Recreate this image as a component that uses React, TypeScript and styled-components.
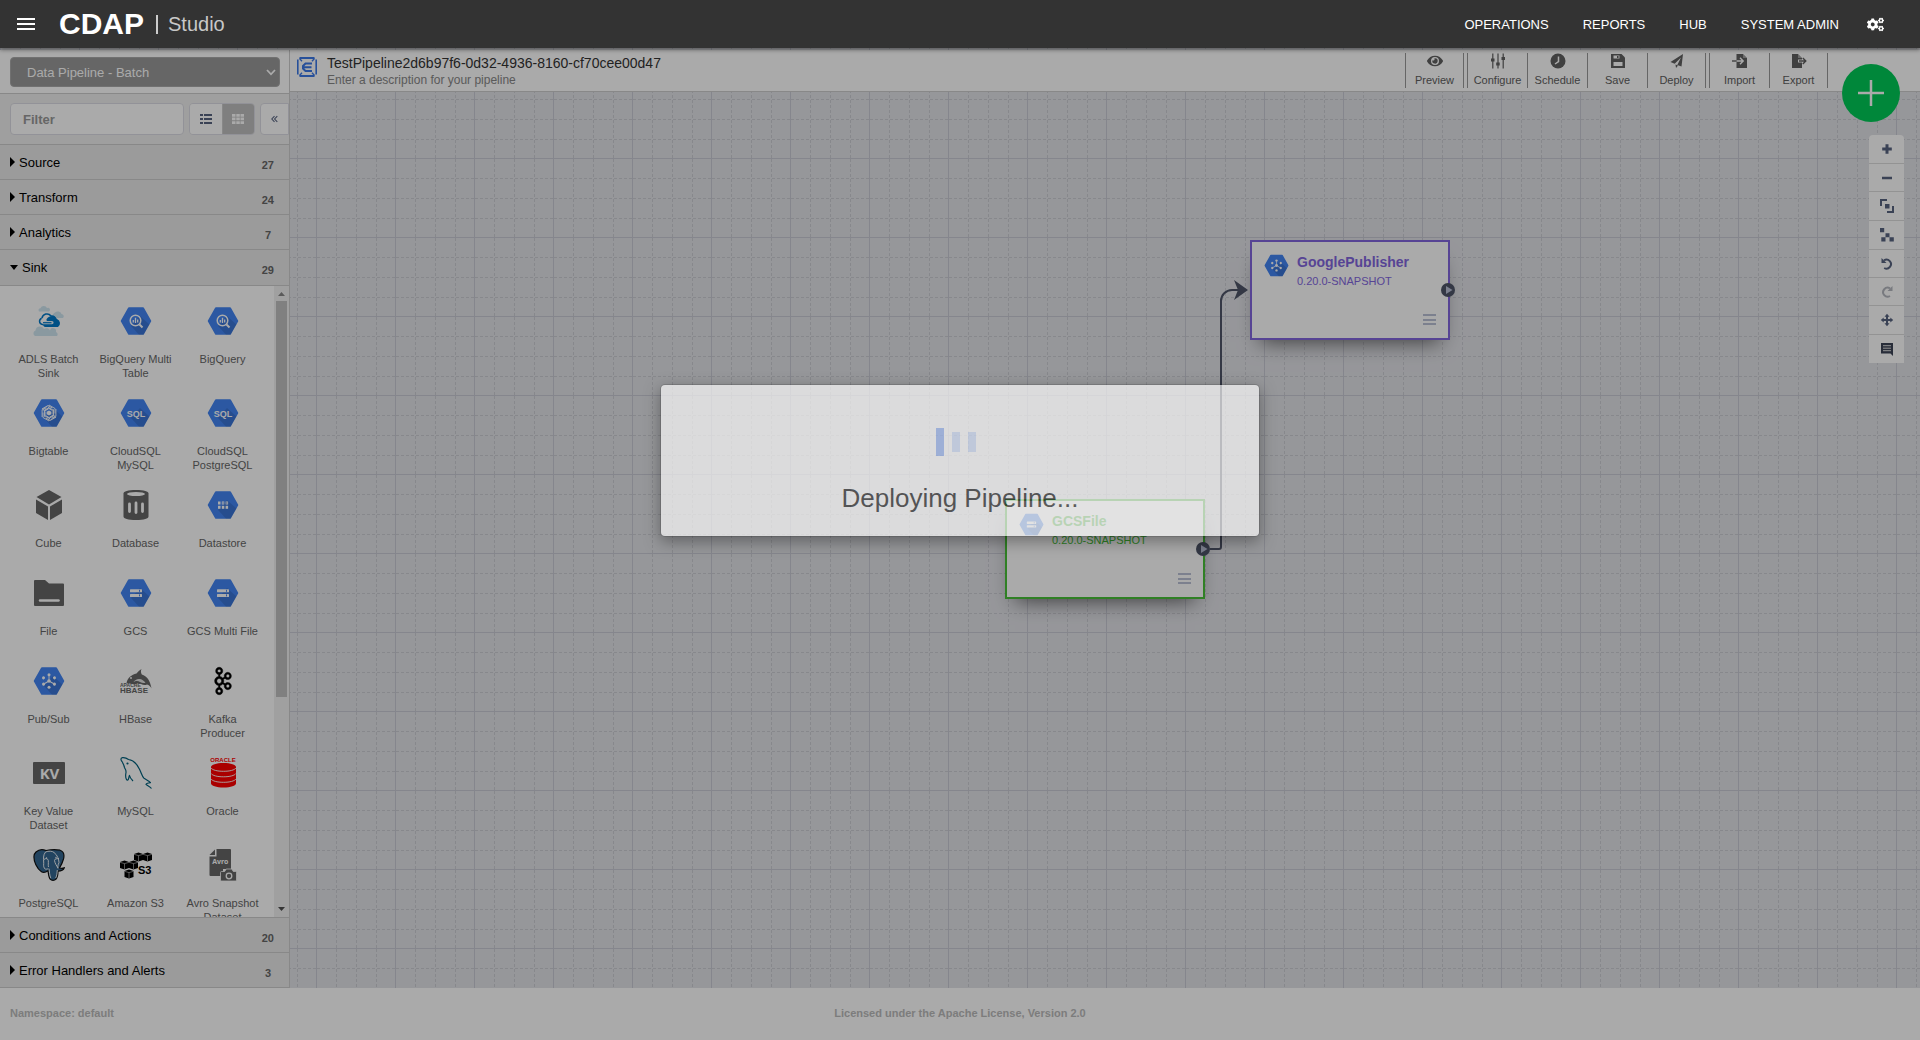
import React from 'react';
import styled, { createGlobalStyle } from 'styled-components';
import { FaCogs, FaEye } from 'react-icons/fa';
import { SiApachekafka } from 'react-icons/si';

const GlobalStyle = createGlobalStyle`
  *, *::before, *::after { box-sizing: border-box; }
  body {
    margin: 0;
    font-family: "Liberation Sans", Arial, sans-serif;
    font-size: 13px;
    color: #333;
    background: #fff;
  }
  button, input, select { font-family: inherit; margin: 0; }
  button { cursor: pointer; }
  svg { display: block; flex: none; }
`;

/* ---------- page frame ---------- */

const Page = styled.div`
  position: relative;
  display: flex;
  flex-direction: column;
  height: 100vh;
  background: #e2e3e8;
  overflow: hidden;
`;

const GridSvg = styled.svg`
  position: absolute;
  inset: 0;
  width: 100%;
  height: 100%;
`;

const Header = styled.header`
  position: relative;
  z-index: 30;
  flex: none;
  display: flex;
  align-items: center;
  height: 48px;
  padding: 0 36px 0 17px;
  background: #333;
  color: #fff;
  box-shadow: 0 2px 4px rgba(0, 0, 0, 0.4);
`;

const BareButton = styled.button`
  display: flex;
  align-items: center;
  justify-content: center;
  padding: 0;
  border: 0;
  background: none;
  color: inherit;
`;

const Brand = styled.a`
  margin-left: 24px;
  color: #fff;
  font-size: 30px;
  font-weight: 700;
  line-height: 48px;
  text-decoration: none;
`;

const Divider = styled.span`
  width: 2px;
  height: 19px;
  margin: 0 10px 0 12px;
  background: #ccc;
`;

const AppName = styled.h1`
  margin: 0;
  color: #c8c8c8;
  font-size: 20px;
  font-weight: 400;
`;

const Nav = styled.nav`
  display: flex;
  align-items: center;
  gap: 34px;
  margin-left: auto;
`;

const NavLink = styled.a`
  color: #fff;
  font-size: 13px;
  text-decoration: none;
`;

const SettingsButton = styled(BareButton)`
  margin-left: -6px;
`;

const Workspace = styled.div`
  position: relative;
  flex: 1;
  min-height: 0;
  display: flex;
  padding-top: 2px;
`;

const Footer = styled.footer`
  position: relative;
  flex: none;
  display: grid;
  grid-template-columns: 1fr auto 1fr;
  align-items: center;
  height: 52px;
  padding: 0 10px 2px;
  background: #fff;
  color: #bbb;
  font-size: 11px;
  font-weight: 700;
`;

/* ---------- side panel ---------- */

const Sidebar = styled.aside`
  flex: none;
  display: flex;
  flex-direction: column;
  width: 290px;
  border-right: 1px solid #ccc;
  background: #fff;
`;

const ArtifactRow = styled.div`
  position: relative;
  padding: 7px 9px 6px 10px;
  border-bottom: 1px solid #ccc;
`;

const ArtifactSelect = styled.select`
  appearance: none;
  width: 100%;
  height: 30px;
  padding: 0 24px 0 16px;
  border: 1px solid #aaa;
  border-radius: 4px;
  background: #999;
  color: #fff;
  font-size: 13px;
`;

const SelectArrow = styled.svg`
  position: absolute;
  top: 19px;
  right: 13px;
  pointer-events: none;
`;

const FilterRow = styled.div`
  display: flex;
  gap: 5px;
  padding: 9px 0 9px 10px;
  border-bottom: 1px solid #ccc;
  background: #efefef;
`;

const FilterInput = styled.input`
  flex: 1;
  min-width: 0;
  height: 32px;
  padding: 0 12px;
  border: 1px solid #dcdce4;
  border-radius: 4px;
  background: #fff;
  font-size: 13px;
  &::placeholder {
    color: #999;
    font-weight: 700;
    opacity: 1;
  }
`;

const ViewSwitch = styled.div`
  display: flex;
  width: 66px;
  border: 1px solid #dcdce4;
  border-radius: 4px;
  overflow: hidden;
`;

const ViewButton = styled(BareButton)<{ $active?: boolean }>`
  flex: 1;
  background: ${(p) => (p.$active ? '#bfbfbf' : '#fff')};
  color: ${(p) => (p.$active ? '#fff' : '#576380')};
  & + & {
    border-left: 1px solid #ccc;
  }
`;

const CollapseButton = styled(BareButton)`
  width: 29px;
  border: 1px solid #dcdce4;
  border-radius: 4px 0 0 4px;
  background: #fff;
  color: #576380;
`;

const GroupHeader = styled.button<{ $open?: boolean }>`
  flex: none;
  display: flex;
  align-items: center;
  gap: 4px;
  width: 100%;
  height: ${(p) => (p.$open ? 36 : 35)}px;
  padding: 0 15px 0 10px;
  border: 0;
  border-bottom: 1px solid #ccc;
  background: #e9e9e9;
  color: #000;
  font-size: 13px;
  text-align: left;
`;

const GroupCount = styled.span`
  min-width: 12px;
  margin-left: auto;
  padding-top: 5px;
  color: #666;
  font-size: 11px;
  font-weight: 700;
  text-align: center;
`;

const PluginPane = styled.div`
  flex: 1;
  min-height: 0;
  display: flex;
  border-bottom: 1px solid #ccc;
  overflow: hidden;
`;

const PluginGrid = styled.ul`
  flex: 1;
  display: grid;
  grid-template-columns: repeat(3, 87px);
  grid-auto-rows: max-content;
  align-content: start;
  margin: 0;
  padding: 10px 0 0 5px;
  list-style: none;
`;

const PluginItem = styled.li`
  display: flex;
  flex-direction: column;
  align-items: center;
  gap: 15px;
  min-height: 88px;
  padding: 9px 7px 8px;
  color: #666;
  font-size: 11px;
  line-height: 14px;
  text-align: center;
`;

const ScrollTrack = styled.div`
  flex: none;
  display: flex;
  flex-direction: column;
  align-items: center;
  gap: 5px;
  width: 15px;
  padding: 6px 0;
  background: #f1f1f1;
`;

const ScrollThumb = styled.div`
  width: 11px;
  height: 64%;
  background: #c1c1c1;
`;

const ScrollDown = styled.div`
  margin-top: auto;
`;

/* ---------- main column ---------- */

const Main = styled.main`
  flex: 1;
  min-width: 0;
  display: flex;
  flex-direction: column;
`;

const TopBar = styled.div`
  flex: none;
  display: flex;
  height: 42px;
  padding: 0 92px 0 7px;
  border-bottom: 1px solid #ccc;
  background: #fff;
`;

const PipelineMark = styled.div`
  padding: 7px 10px 0 0;
`;

const PipelineInfo = styled.div`
  padding-top: 4px;
`;

const PipelineName = styled.h2`
  margin: 0;
  color: #333;
  font-size: 14px;
  font-weight: 400;
  line-height: 18px;
`;

const PipelineDescription = styled.p`
  margin: 0;
  color: #888;
  font-size: 12px;
  line-height: 16px;
`;

const Actions = styled.div`
  display: flex;
  gap: 3px;
  height: 35px;
  margin: 3px 0 0 auto;
`;

const ActionGroup = styled.div`
  display: flex;
`;

const ActionButton = styled.button`
  display: flex;
  flex-direction: column;
  align-items: center;
  gap: 4px;
  width: 60px;
  padding: 0;
  border: 0;
  border-left: 1px solid #999;
  background: none;
  color: #606060;
  font-size: 11px;
  line-height: 14px;
  &:last-child {
    width: 59px;
    border-right: 1px solid #999;
  }
`;

const Canvas = styled.div`
  position: relative;
  flex: 1;
  min-height: 0;
`;

const Connections = styled.svg`
  position: absolute;
  inset: 0;
  width: 100%;
  height: 100%;
`;

const Node = styled.section<{ $x: number; $y: number; $color: string }>`
  position: absolute;
  left: ${(p) => p.$x}px;
  top: ${(p) => p.$y}px;
  display: flex;
  flex-direction: column;
  justify-content: space-between;
  width: 200px;
  height: 100px;
  padding: 10px 12px 12px;
  border: 2px solid ${(p) => p.$color};
  background: #fff;
  color: ${(p) => p.$color};
  box-shadow: 0 12px 20px -10px rgba(0, 0, 0, 0.6);
`;

const NodeHead = styled.div`
  display: flex;
  gap: 8px;
`;

const NodeIcon = styled.div`
  padding-top: 1px;
`;

const NodeName = styled.h3`
  margin: 0;
  font-size: 14px;
  font-weight: 700;
  line-height: 20px;
`;

const NodeVersion = styled.div`
  font-size: 11px;
  line-height: 18px;
`;

const NodeMenu = styled(BareButton)`
  align-self: flex-end;
  color: #bac0d6;
`;

const Endpoint = styled.span`
  position: absolute;
  top: 41px;
  right: -7px;
`;

const AddButton = styled(BareButton)`
  position: absolute;
  top: 16px;
  right: 20px;
  width: 58px;
  height: 58px;
  border-radius: 50%;
  background: #00cb57;
  color: #fff;
`;

const CanvasTools = styled.div`
  position: absolute;
  top: 43px;
  right: 16px;
  display: flex;
  flex-direction: column;
  width: 35px;
  border-radius: 4px 4px 0 0;
  background: #fff;
  overflow: hidden;
`;

const ToolButton = styled(BareButton)<{ $tall?: boolean; $faded?: boolean }>`
  height: ${(p) => (p.$tall ? 29 : 28)}px;
  color: ${(p) => (p.$faded ? '#b4b7bf' : '#576380')};
  & + & {
    border-top: 1px solid #ddd;
  }
`;

/* ---------- deploy dialog ---------- */

const Backdrop = styled.div`
  position: absolute;
  inset: 0;
  z-index: 20;
  display: flex;
  align-items: flex-start;
  justify-content: center;
  padding-top: 384px;
  background: rgba(0, 0, 0, 0.333);
`;

const Dialog = styled.div`
  display: flex;
  flex-direction: column;
  align-items: center;
  gap: 28px;
  width: 600px;
  padding: 43px 0 24px;
  border: 1px solid rgba(0, 0, 0, 0.2);
  border-radius: 5px;
  background: #fff;
  background-clip: padding-box;
  box-shadow: 0 5px 15px rgba(0, 0, 0, 0.5);
  opacity: 0.66;
`;

const Spinner = styled.div`
  display: flex;
  align-items: center;
  gap: 8px;
  height: 28px;
  margin-right: 8px;
`;

const SpinnerBar = styled.span<{ $strong?: boolean }>`
  width: 8px;
  height: ${(p) => (p.$strong ? 28 : 20)}px;
  background: ${(p) => (p.$strong ? '#a2bcf5' : '#d5e2fb')};
`;

const DialogText = styled.p`
  margin: 0;
  color: #333;
  font-size: 26px;
  line-height: 28px;
`;

/* ---------- plugin drawings ---------- */

type HexProps = { children?: React.ReactNode; size?: number };

const Hex = ({ children, size = 32 }: HexProps) => (
  <svg width={size} height={size} viewBox="0 0 32 32" aria-hidden="true">
    <path
      d="M9 2.2h14a1 1 0 0 1 .9.5l7.2 12.7a1.200 1.200 0 0 1 0 1.200l-7.200 12.700a1 1 0 0 1-.9.5H9a1 1 0 0 1-.9-.5L.9 16.600a1.200 1.200 0 0 1 0-1.200L8.100 2.700A1 1 0 0 1 9 2.200z"
      fill="#4285f4"
    />
    <path d="M20 11l9.500 8.500-5.600 9.800a1 1 0 0 1-.9.500h-4L11 21z" fill="#000" opacity="0.12" />
    {children}
  </svg>
);

const BigQueryIcon = () => (
  <Hex>
    <circle cx="15.500" cy="15.500" r="5.300" fill="none" stroke="#fff" strokeWidth="1.500" />
    <path d="M19.500 19.500l3 3" stroke="#fff" strokeWidth="2" />
    <path d="M13.300 15v2.500M15.500 12.800v5.200M17.700 14.500v3" stroke="#fff" strokeWidth="1.300" />
  </Hex>
);

const BigtableIcon = () => (
  <Hex>
    <g fill="none" stroke="#fff" strokeWidth="0.900">
      {[0, 60, 120, 180, 240, 300].map((a) => (
        <g key={a} transform={`rotate(${a} 16 16)`}>
          <path d="M16 8l6 3.500v5" />
          <path d="M15 10.200l5 2.800v4.500" />
        </g>
      ))}
    </g>
    <path d="M16 13.500l2.400 1.200v2.600L16 18.500l-2.400-1.200v-2.600z" fill="#fff" />
  </Hex>
);

const SqlIcon = () => (
  <Hex>
    <text x="16" y="19.500" textAnchor="middle" fill="#fff" fontSize="9" fontWeight="700" fontFamily="Liberation Sans">
      SQL
    </text>
  </Hex>
);

const DatastoreIcon = () => (
  <Hex>
    <g fill="#fff">
      <rect x="11" y="12.500" width="2.500" height="3" />
      <rect x="11" y="16.800" width="2.500" height="3" />
      <rect x="14.800" y="16.800" width="2.500" height="3" />
      <rect x="18.600" y="16.800" width="2.500" height="3" />
    </g>
    <g fill="none" stroke="#fff" strokeWidth="0.800">
      <rect x="15.200" y="12.900" width="1.700" height="2.200" />
      <rect x="19" y="12.900" width="1.700" height="2.200" />
    </g>
  </Hex>
);

const GcsIcon = ({ size }: { size?: number }) => (
  <Hex size={size}>
    <rect x="10" y="12.300" width="12" height="3" rx="0.500" fill="#fff" />
    <rect x="10" y="16.900" width="12" height="3" rx="0.500" fill="#fff" />
    <path d="M19.500 12.800v2M19.500 17.400v2" stroke="#4285f4" strokeWidth="1" />
  </Hex>
);

const PubSubIcon = ({ size }: { size?: number }) => (
  <Hex size={size}>
    <g fill="#fff" stroke="#fff">
      <circle cx="16" cy="16" r="1.800" stroke="none" />
      {[0, 60, 120, 180, 240, 300].map((a) => (
        <g key={a} transform={`rotate(${a} 16 16)`}>
          <circle cx="16" cy="9.700" r="1.500" stroke="none" />
          {a % 120 === 0 && <path d="M16 15v-4.500" strokeWidth="0.900" />}
        </g>
      ))}
    </g>
  </Hex>
);

const AdlsIcon = () => (
  <svg width="32" height="32" viewBox="0 0 32 32" aria-hidden="true">
    <g fill="#cfe6f1">
      <path d="M6 6.500a2 2 0 0 1 1.500-3.300A3.500 3.500 0 0 1 14 3a2 2 0 0 1 2 3.500z" />
      <path d="M20 13a4 4 0 0 1 2-5.500 4 4 0 0 1 6.500 1.500 2.300 2.300 0 0 1 1.500 4z" />
      <path d="M2 31a3 3 0 0 1 .5-5.500 4.500 4.500 0 0 1 8.500-1.500 4 4 0 0 1 6 1.500 3 3 0 0 1 6 1.500 2.500 2.500 0 0 1 1 4z" />
    </g>
    <path d="M12.500 22a3.200 3.200 0 0 1 .5-6.300A6 6 0 0 1 24 14a4.500 4.500 0 0 1 1 8z" fill="#0078c8" />
    <path
      d="M18.500 19.500h-9a3.200 3.200 0 0 1-.5-6.300 5 5 0 0 1 9-2.200 4 4 0 0 1 4.500 3"
      fill="none"
      stroke="#0078c8"
      strokeWidth="1.500"
    />
    <path d="M8.500 13.500c3-.5 4.500.5 5.500 2.500h5a1.600 1.600 0 0 1 0 3.200h-9" fill="#fff" opacity="0.900" />
    <path d="M10 17.700h8.500" stroke="#0078c8" strokeWidth="1.200" />
  </svg>
);

const CubeIcon = () => (
  <svg width="32" height="32" viewBox="0 0 32 32" fill="#666" aria-hidden="true">
    <path d="M16 1l12.500 7L16 15.500 3.500 8z" />
    <path d="M3 10.500l12 7V31L3 24z" />
    <path d="M29 10.500l-12 7V31l12-7z" />
  </svg>
);

const DatabaseIcon = () => (
  <svg width="32" height="32" viewBox="0 0 32 32" aria-hidden="true">
    <path d="M3.500 4.500C3.500 2.500 8 1 16 1s12.500 1.500 12.500 3.500v23c0 2-4.500 3.500-12.500 3.500S3.500 29.500 3.500 27.500z" fill="#666" />
    <ellipse cx="16" cy="5" rx="9" ry="2" fill="#fff" />
    <g stroke="#fff" strokeWidth="2.800" strokeLinecap="round">
      <path d="M9.500 15v7.500M16 14v9.500M22.500 15v7.500" />
    </g>
  </svg>
);

const FileIcon = () => (
  <svg width="32" height="32" viewBox="0 0 32 32" aria-hidden="true">
    <path d="M1 4a1 1 0 0 1 1-1h10l4 3.500h14a1 1 0 0 1 1 1V28a1 1 0 0 1-1 1H2a1 1 0 0 1-1-1z" fill="#666" />
    <path d="M7 23.500h18.500" stroke="#fff" strokeWidth="2.500" strokeLinecap="round" />
  </svg>
);

const HBaseIcon = () => (
  <svg width="32" height="32" viewBox="0 0 32 32" aria-hidden="true">
    <path
      d="M6.500 18c1-5 5-8.500 10-9.500 1.500-1.500 3-3.500 5-4.500-1 2-.5 4 .3 5.500 5 1.500 8.500 6 9.700 14-1-2-2.500-3.500-4.500-4-2 1-4 .500-6-.5l-3-1-3 1.500z"
      fill="#666"
    />
    <path d="M13 17.500c2-2 5-2 7-.5 2 1 4 1.500 5.500.5-1.500-1.200-3-3-5.500-3.500-3-.5-5 1-7 3.500z" fill="#fff" opacity="0.800" />
    <circle cx="11" cy="13" r="0.900" fill="#fff" />
    <text x="0" y="22" fill="#666" fontSize="5" fontWeight="700" fontFamily="Liberation Sans">
      APACHE
    </text>
    <text x="0" y="28" fill="#666" fontSize="8" fontWeight="700" fontFamily="Liberation Sans">
      HBASE
    </text>
  </svg>
);

const KeyValueIcon = () => (
  <svg width="32" height="32" viewBox="0 0 32 32" aria-hidden="true">
    <rect y="5" width="32" height="22" rx="1" fill="#666" />
    <text x="16.500" y="21.500" textAnchor="middle" fill="#fff" fontSize="15" fontWeight="700" fontFamily="Open Sans">
      KV
    </text>
  </svg>
);

const MySqlIcon = () => (
  <svg width="32" height="32" viewBox="0 0 32 32" fill="none" stroke="#00607d" strokeWidth="1.200" strokeLinejoin="round" aria-hidden="true">
    <path d="M31.500 31.500c-1-1.500-3-2.500-5.500-4 0-1 2.500-1.500 4.500-1.800-1.500-1.700-4-3-6.500-4.500-2-1.500-2.500-5-4.500-9C16.500 6 13 3 8.500 2.500 6.500 1 4.500.500 2.500.700.300 1 .700 3 2 4.500 3.500 7 4 8.500 4.500 10.500c.800 2 1.800 2.500 1.500 5-.500 2.500-.700 5 .5 7 .500 1 1.500 1 2-.500.500-1.500.500-3 1-3.500.500 2.500 2 4 3.500 5.500" />
    <circle cx="7.500" cy="6.500" r="0.500" fill="#00607d" />
  </svg>
);

const OracleIcon = () => (
  <svg width="32" height="32" viewBox="0 0 32 32" aria-hidden="true">
    <text x="16" y="5" textAnchor="middle" fill="#f00" fontSize="6" fontWeight="700" fontFamily="Liberation Sans">
      ORACLE
    </text>
    <path d="M4 10c0-2.200 5.300-4 12.500-4S29 7.800 29 10v16.500c0 2.200-5.300 4-12.500 4S4 28.700 4 26.500z" fill="#f00" />
    <g fill="none" stroke="#fff" strokeWidth="0.900">
      <path d="M4 11c1.500 2 6 3.300 12.500 3.300S27.500 13 29 11" />
      <path d="M4 16.500c1.500 2 6 3.300 12.500 3.300s11-1.300 12.500-3.300" />
      <path d="M4 22c1.500 2 6 3.300 12.500 3.300S27.500 24 29 22" />
    </g>
  </svg>
);

const PostgresIcon = () => (
  <svg width="32" height="32" viewBox="0 0 32 32" aria-hidden="true">
    <path
      d="M3 3C6 .3 10.500.5 13 1.500c5-1 10-1.200 14-.3 4 1.300 4.500 4.800 3.500 8.800-1 3.500-2.500 6.500-4 9 2 .5 3.500.3 4.800-.2-.8 2.200-3.300 3.400-6.300 3.400 0 3-.5 6-2 8-1.500 1.500-4.500 1.500-5.800 0-1.500-2-1.700-5-2.200-8.500-2 1.500-4.500 2.300-6.500 1C4 20 .5 12 1 7c.2-2 1-3 2-4z"
      fill="#336791"
      stroke="#111"
      strokeWidth="1.200"
    />
    <g fill="none" stroke="#fff" strokeWidth="0.900">
      <path d="M12.500 3c-2.500 3-2 7-1.800 10 .2 2.500-.7 4 .8 6.500 1 1 2.500.7 3.700.2" />
      <path d="M12.500 3c3-1.300 7-1 8.500.5 3.500 2.500 4.800 7 5 10-1 2.500-1.500 4-1 6" />
      <path d="M11 10.500c1.500-1.500 4-1 4.300 1 .2 3-.3 4.500.2 6.500M26 9.500c-2 .3-4.500 0-4.500 2 .5 3 2 5 3.500 7.500" />
      <path d="M16 19.700c.5 3 .5 6.500 1.800 9.500M24.300 21c-.3 3-.3 5.500-1.600 8" />
    </g>
    <circle cx="13.500" cy="9" r="0.700" fill="#fff" />
    <circle cx="23" cy="8.500" r="0.700" fill="#fff" />
  </svg>
);

const s3Cubes = [
  [14, 3],
  [23, 3],
  [0, 11],
  [9, 11],
  [4.5, 20],
];

const S3Icon = () => (
  <svg width="32" height="32" viewBox="0 0 32 32" aria-hidden="true">
    {s3Cubes.map(([x, y]) => (
      <g key={`${x}-${y}`} transform={`translate(${x} ${y})`}>
        <path d="M0 2l4.500-1.500L9 2v6L4.500 9.500 0 8z" fill="#000" />
        <path d="M0 2.300l4.500 1.300L9 2.300M4.500 3.600v5.600" fill="none" stroke="#fff" strokeWidth="0.500" />
      </g>
    ))}
    <text x="18" y="25" fill="#000" fontSize="11" fontWeight="700" fontFamily="Liberation Sans">
      S3
    </text>
  </svg>
);

const AvroIcon = () => (
  <svg width="32" height="32" viewBox="0 0 32 32" aria-hidden="true">
    <path d="M9.500 0H23a1 1 0 0 1 1 1v19h-8v7H3.500a1 1 0 0 1-1-1V7.500h7z" fill="#666" />
    <path d="M8 .5V6H2.500z" fill="#666" />
    <text x="13.300" y="14.800" textAnchor="middle" fill="#fff" fontSize="7" fontWeight="700" fontFamily="Open Sans">
      Avro
    </text>
    <path
      d="M14.500 22.500h3.200l1.500-2.500h5.600l1.500 2.500h2.200a1 1 0 0 1 1 1V31a1 1 0 0 1-1 1h-14a1 1 0 0 1-1-1v-7.500a1 1 0 0 1 1-1z"
      fill="#666"
      stroke="#fff"
      strokeWidth="0.800"
    />
    <circle cx="22" cy="27" r="2.800" fill="none" stroke="#fff" strokeWidth="1.300" />
  </svg>
);

const KafkaIcon = () => (
  <SiApachekafka size={32} color="#000" stroke="#000" strokeWidth="0.4" viewBox="-2 -2 28 28" />
);

const plugins: { name: string; icon: React.ReactNode }[] = [
  { name: 'ADLS Batch Sink', icon: <AdlsIcon /> },
  { name: 'BigQuery Multi Table', icon: <BigQueryIcon /> },
  { name: 'BigQuery', icon: <BigQueryIcon /> },
  { name: 'Bigtable', icon: <BigtableIcon /> },
  { name: 'CloudSQL MySQL', icon: <SqlIcon /> },
  { name: 'CloudSQL PostgreSQL', icon: <SqlIcon /> },
  { name: 'Cube', icon: <CubeIcon /> },
  { name: 'Database', icon: <DatabaseIcon /> },
  { name: 'Datastore', icon: <DatastoreIcon /> },
  { name: 'File', icon: <FileIcon /> },
  { name: 'GCS', icon: <GcsIcon /> },
  { name: 'GCS Multi File', icon: <GcsIcon /> },
  { name: 'Pub/Sub', icon: <PubSubIcon /> },
  { name: 'HBase', icon: <HBaseIcon /> },
  { name: 'Kafka Producer', icon: <KafkaIcon /> },
  { name: 'Key Value Dataset', icon: <KeyValueIcon /> },
  { name: 'MySQL', icon: <MySqlIcon /> },
  { name: 'Oracle', icon: <OracleIcon /> },
  { name: 'PostgreSQL', icon: <PostgresIcon /> },
  { name: 'Amazon S3', icon: <S3Icon /> },
  { name: 'Avro Snapshot Dataset', icon: <AvroIcon /> },
];

/* ---------- toolbar drawings ---------- */

const ToolSvg = ({ children }: { children: React.ReactNode }) => (
  <svg width="16" height="16" viewBox="0 0 16 16" fill="currentColor" aria-hidden="true">
    {children}
  </svg>
);

const SlidersIcon = () => (
  <ToolSvg>
    <path d="M2.200.5h1.200v15H2.200zM7.400.5h1.200v15H7.400zM12.600.5h1.200v15h-1.200z" />
    <path d="M1 5.500h3.500v3H1zM6.200 9.500h3.500v3H6.200zM11.500 4H15v3h-3.500z" />
  </ToolSvg>
);

const ClockIcon = () => (
  <ToolSvg>
    <circle cx="8" cy="8" r="7.500" />
    <path d="M8.500 3.500v5L5 11" fill="none" stroke="#fff" strokeWidth="1.500" />
  </ToolSvg>
);

const SaveIcon = () => (
  <ToolSvg>
    <path d="M1 1h10.500L15 4.500V15H1z" />
    <path d="M3.500 2.500h6v3h-6zM3.500 9h9v4h-9z" fill="#fff" />
    <path d="M7 3h1.500v2H7z" />
  </ToolSvg>
);

const DeployIcon = () => (
  <ToolSvg>
    <path d="M14 1l-1.500 12.500L8.300 12l3.700-7.500-6.300 6.300L1.500 9z" />
    <path d="M6.500 11.500l2.500 1-2 2.500z" />
  </ToolSvg>
);

const ImportIcon = () => (
  <ToolSvg>
    <path d="M4.500 1H11l4 4v10H4.500z" />
    <path d="M4.500 8H11M8 4.800L11.200 8 8 11.200" fill="none" stroke="#fff" strokeWidth="1.400" />
    <path d="M0 8h4.500" stroke="currentColor" strokeWidth="1.400" />
    <path d="M11 1l4 4h-4z" fill="#fff" opacity="0.400" />
  </ToolSvg>
);

const ExportIcon = () => (
  <ToolSvg>
    <path d="M1 1h6l4 4v1.500H7v3h4V15H1z" />
    <path d="M8 8h6.500M11.800 5l3 3-3 3" fill="none" stroke="currentColor" strokeWidth="1.400" />
    <path d="M7 1l4 4H7z" fill="#fff" opacity="0.400" />
  </ToolSvg>
);

const actionGroups: { label: string; icon: React.ReactNode }[][] = [
  [{ label: 'Preview', icon: <FaEye size={16} /> }],
  [
    { label: 'Configure', icon: <SlidersIcon /> },
    { label: 'Schedule', icon: <ClockIcon /> },
    { label: 'Save', icon: <SaveIcon /> },
    { label: 'Deploy', icon: <DeployIcon /> },
  ],
  [
    { label: 'Import', icon: <ImportIcon /> },
    { label: 'Export', icon: <ExportIcon /> },
  ],
];

const LinesIcon = () => (
  <svg width="13" height="12" viewBox="0 0 13 12" fill="currentColor" aria-hidden="true">
    <path d="M0 0h13v2H0zM0 5h13v2H0zM0 9h13v2H0z" />
  </svg>
);

const EndpointMark = () => (
  <svg width="14" height="14" viewBox="0 0 14 14" aria-hidden="true">
    <circle cx="7" cy="7" r="7" fill="#4e5568" />
    <path d="M5 3l6.500 4L5 11z" fill="#bac0d6" />
  </svg>
);

const tools: { label: string; tall?: boolean; faded?: boolean; art: React.ReactNode }[] = [
  { label: 'Zoom in', art: <path d="M5.500 2.200h3v3.300h3.300v3H8.500v3.300h-3V8.500H2.200v-3h3.300z" /> },
  { label: 'Zoom out', art: <path d="M2 5.700h10v2.600H2z" /> },
  {
    label: 'Fit to screen',
    tall: true,
    art: (
      <>
        <path d="M0 0h7v2H2v5H0zM14 14H7v-2h5V7h2z" />
        <path d="M5 5h4.500v4.500H5z" />
      </>
    ),
  },
  { label: 'Align', tall: true, art: <path d="M0 0h4.200v4.200H0zM5.500 5.200h4v4h-4zM1.300 9.200h4.200v4.200H1.300zM9.500 9.200h4.300v4.200H9.500z" /> },
  {
    label: 'Undo',
    art: (
      <>
        <path d="M4 3.300A4.500 4.500 0 1 1 4.200 11" fill="none" stroke="currentColor" strokeWidth="2" />
        <path d="M1.500 1v5h5z" />
      </>
    ),
  },
  {
    label: 'Redo',
    faded: true,
    art: (
      <>
        <path d="M10 3.300A4.500 4.500 0 1 0 10 11" fill="none" stroke="currentColor" strokeWidth="2" />
        <path d="M12.500 1v5h-5z" />
      </>
    ),
  },
  {
    label: 'Move',
    tall: true,
    art: <path d="M7 .8l2.500 2.900H8v2.300h2.300V4.500L13.200 7l-2.900 2.500V8H8v2.300h1.500L7 13.200l-2.500-2.900H6V8H3.700v1.500L.8 7l2.900-2.500V6H6V3.700H4.500z" />,
  },
  {
    label: 'Comments',
    tall: true,
    art: (
      <g fill="#3d4456">
        <path d="M1 1h12v13l-2.500-2.500H1z" />
        <path d="M3 3.700h8M3 6.200h8M3 8.700h8" stroke="#ddd" strokeWidth="1" />
      </g>
    ),
  },
];

const groupsAbove = [
  { name: 'Source', count: 27 },
  { name: 'Transform', count: 24 },
  { name: 'Analytics', count: 7 },
];

const groupsBelow = [
  { name: 'Conditions and Actions', count: 20 },
  { name: 'Error Handlers and Alerts', count: 3 },
];

const Group = ({ name, count, open }: { name: string; count: number; open?: boolean }) => (
  <GroupHeader type="button" $open={open} aria-expanded={!!open}>
    {open ? (
      <svg width="8" height="5" viewBox="0 0 8 5" aria-hidden="true">
        <path d="M0 0h8L4 5z" />
      </svg>
    ) : (
      <svg width="5" height="10" viewBox="0 0 5 10" aria-hidden="true">
        <path d="M0 0l5 5-5 5z" />
      </svg>
    )}
    {name}
    <GroupCount>{count}</GroupCount>
  </GroupHeader>
);

type NodeProps = { x: number; y: number; color: string; name: string; icon: React.ReactNode };

const PipelineNode = ({ x, y, color, name, icon }: NodeProps) => (
  <Node $x={x} $y={y} $color={color}>
    <NodeHead>
      <NodeIcon>{icon}</NodeIcon>
      <div>
        <NodeName>{name}</NodeName>
        <NodeVersion>0.20.0-SNAPSHOT</NodeVersion>
      </div>
    </NodeHead>
    <NodeMenu type="button" aria-label={`${name} menu`}>
      <LinesIcon />
    </NodeMenu>
    <Endpoint>
      <EndpointMark />
    </Endpoint>
  </Node>
);

const CanvasGrid = () => (
  <GridSvg aria-hidden="true">
    <defs>
      <pattern id="canvas-grid" width="79" height="79" patternUnits="userSpaceOnUse">
        <path d="M.5 0v79M0 .5h79" stroke="#c8c9d4" />
        <path
          d="M20.500 1v78M40.500 1v78M60.500 1v78M1 20.500h78M1 40.500h78M1 60.500h78"
          stroke="#cbccd3"
          strokeDasharray="3 2"
        />
      </pattern>
    </defs>
    <rect width="100%" height="100%" fill="url(#canvas-grid)" />
  </GridSvg>
);

export default function App() {
  return (
    <Page>
      <GlobalStyle />
      <CanvasGrid />
      <Header>
        <BareButton type="button" aria-label="Menu">
          <svg width="18" height="12" viewBox="0 0 18 12" fill="currentColor" aria-hidden="true">
            <path d="M0 0h18v2H0zM0 5h18v2H0zM0 10h18v2H0z" />
          </svg>
        </BareButton>
        <Brand href="#">CDAP</Brand>
        <Divider />
        <AppName>Studio</AppName>
        <Nav>
          <NavLink href="#operations">OPERATIONS</NavLink>
          <NavLink href="#reports">REPORTS</NavLink>
          <NavLink href="#hub">HUB</NavLink>
          <NavLink href="#admin">SYSTEM ADMIN</NavLink>
          <SettingsButton type="button" aria-label="Settings">
            <FaCogs size={17} />
          </SettingsButton>
        </Nav>
      </Header>

      <Workspace>
        <Sidebar>
          <ArtifactRow>
            <ArtifactSelect aria-label="Pipeline type" defaultValue="batch">
              <option value="batch">Data Pipeline - Batch</option>
            </ArtifactSelect>
            <SelectArrow width="10" height="7" viewBox="0 0 10 7" aria-hidden="true">
              <path d="M1 1l4 4.300L9 1" fill="none" stroke="#fff" strokeWidth="1.800" />
            </SelectArrow>
          </ArtifactRow>
          <FilterRow>
            <FilterInput type="text" placeholder="Filter" aria-label="Filter" />
            <ViewSwitch>
              <ViewButton type="button" aria-label="List view">
                <svg width="12" height="10" viewBox="0 0 12 10" fill="currentColor" aria-hidden="true">
                  <path d="M0 0h3v2H0zM4 0h8v2H4zM0 4h3v2H0zM4 4h8v2H4zM0 8h3v2H0zM4 8h8v2H4z" />
                </svg>
              </ViewButton>
              <ViewButton type="button" aria-label="Grid view" $active>
                <svg width="12" height="10" viewBox="0 0 12 10" fill="currentColor" aria-hidden="true">
                  <path d="M0 0h3.500v2.700H0zM4.300 0h3.500v2.700H4.300zM8.500 0H12v2.700H8.500zM0 3.600h3.500v2.700H0zM4.300 3.600h3.500v2.700H4.300zM8.500 3.600H12v2.700H8.500zM0 7.300h3.500V10H0zM4.300 7.300h3.500V10H4.300zM8.500 7.300H12V10H8.500z" />
                </svg>
              </ViewButton>
            </ViewSwitch>
            <CollapseButton type="button" aria-label="Collapse panel">
              <svg width="7" height="8" viewBox="0 0 8 8" fill="none" stroke="currentColor" strokeWidth="1.200" aria-hidden="true">
                <path d="M4 .7L.9 4 4 7.300M7.200.7L4.100 4l3.100 3.300" />
              </svg>
            </CollapseButton>
          </FilterRow>
          {groupsAbove.map((g) => (
            <Group key={g.name} {...g} />
          ))}
          <Group name="Sink" count={29} open />
          <PluginPane>
            <PluginGrid>
              {plugins.map((p) => (
                <PluginItem key={p.name}>
                  {p.icon}
                  {p.name}
                </PluginItem>
              ))}
            </PluginGrid>
            <ScrollTrack>
              <svg width="7" height="4" viewBox="0 0 7 4" aria-hidden="true">
                <path d="M0 4l3.500-4L7 4z" fill="#888" />
              </svg>
              <ScrollThumb />
              <ScrollDown>
                <svg width="7" height="4" viewBox="0 0 7 4" aria-hidden="true">
                  <path d="M0 0l3.500 4L7 0z" fill="#505050" />
                </svg>
              </ScrollDown>
            </ScrollTrack>
          </PluginPane>
          {groupsBelow.map((g) => (
            <Group key={g.name} {...g} />
          ))}
        </Sidebar>

        <Main>
          <TopBar>
            <PipelineMark>
              <svg width="20" height="20" viewBox="0 0 20 20" aria-hidden="true">
                <g fill="none" stroke="#3b78e7">
                  <path d="M2.500 1h15M2.500 19h15" strokeWidth="2" />
                  <path d="M.8 2.500v15M19.200 2.500v15" strokeWidth="1.600" />
                  <path d="M2.500 1.500l2.500 2.700M17.500 1.500L15 4.200M2.500 18.500L5 15.800M17.500 18.500L15 15.800" strokeWidth="1.300" />
                  <path d="M15 6.500H8.500L6 9v2.500L8.500 14H15M6 10.300h8.500" strokeWidth="2" />
                </g>
              </svg>
            </PipelineMark>
            <PipelineInfo>
              <PipelineName>TestPipeline2d6b97f6-0d32-4936-8160-cf70cee00d47</PipelineName>
              <PipelineDescription>Enter a description for your pipeline</PipelineDescription>
            </PipelineInfo>
            <Actions>
              {actionGroups.map((group) => (
                <ActionGroup key={group[0].label}>
                  {group.map((a) => (
                    <ActionButton type="button" key={a.label}>
                      {a.icon}
                      {a.label}
                    </ActionButton>
                  ))}
                </ActionGroup>
              ))}
            </Actions>
          </TopBar>
          <Canvas>
            <PipelineNode x={960} y={148} color="#8367df" name="GooglePublisher" icon={<PubSubIcon size={25} />} />
            <PipelineNode x={715} y={407} color="#48c038" name="GCSFile" icon={<GcsIcon size={25} />} />
            <Connections aria-hidden="true" pointerEvents="none">
              <path d="M920 457h9a2 2 0 0 0 2-2V209a11 11 0 0 1 11-11h6" fill="none" stroke="#4e5568" strokeWidth="2" />
              <path d="M958 198l-14-10 4 10-4 10z" fill="#4e5568" />
            </Connections>
            <CanvasTools>
              {tools.map((t) => (
                <ToolButton type="button" key={t.label} aria-label={t.label} $tall={t.tall} $faded={t.faded}>
                  <svg width="14" height="14" viewBox="0 0 14 14" fill="currentColor" aria-hidden="true">
                    {t.art}
                  </svg>
                </ToolButton>
              ))}
            </CanvasTools>
          </Canvas>
        </Main>
        <AddButton type="button" aria-label="Add entity">
          <svg width="26" height="26" viewBox="0 0 26 26" stroke="currentColor" strokeWidth="2.500" aria-hidden="true">
            <path d="M13 0v26M0 13h26" />
          </svg>
        </AddButton>
      </Workspace>

      <Footer>
        <span>Namespace: default</span>
        <span>Licensed under the Apache License, Version 2.0</span>
      </Footer>

      <Backdrop>
        <Dialog role="dialog" aria-label="Deploying Pipeline">
          <Spinner>
            <SpinnerBar $strong />
            <SpinnerBar />
            <SpinnerBar />
          </Spinner>
          <DialogText>Deploying Pipeline...</DialogText>
        </Dialog>
      </Backdrop>
    </Page>
  );
}
